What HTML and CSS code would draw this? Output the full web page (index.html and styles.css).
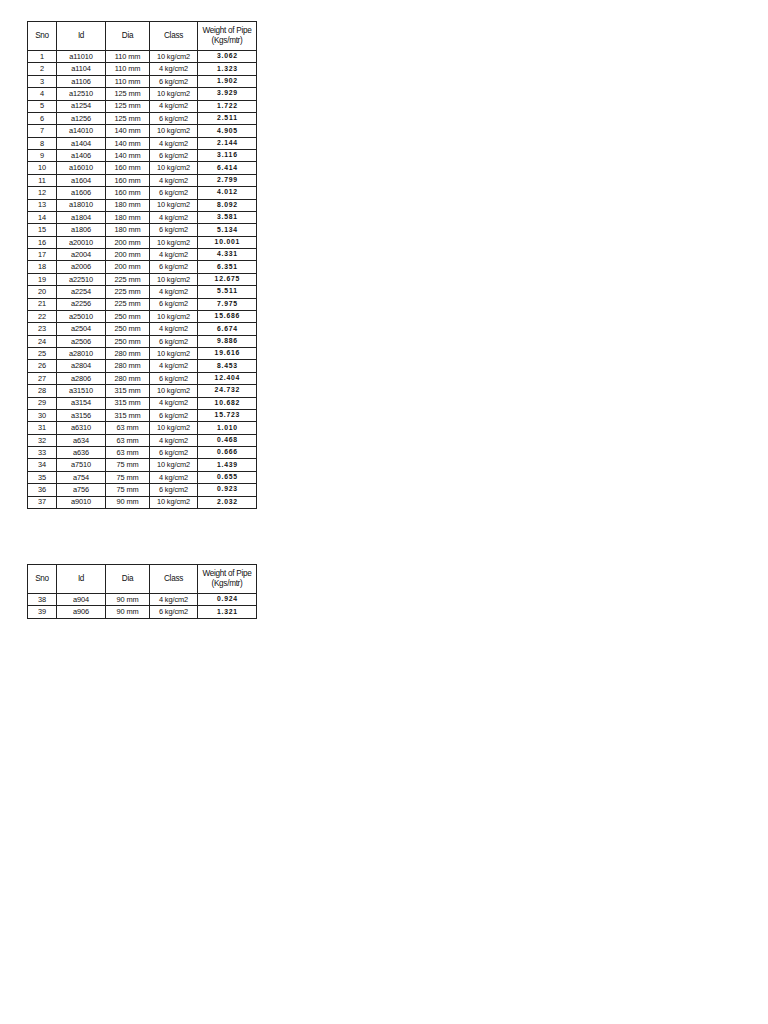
FILE: index.html
```html
<!DOCTYPE html>
<html>
<head>
<meta charset="utf-8">
<link rel="stylesheet" href="styles.css">
</head>
<body>
<div class="page">
<table class="pipes">
<colgroup><col class="c1"><col class="c2"><col class="c3"><col class="c4"><col class="c5"></colgroup>
<thead><tr><th>Sno</th><th>Id</th><th>Dia</th><th>Class</th><th>Weight of Pipe<br>(Kgs/mtr)</th></tr></thead>
<tbody>
<tr><td>1</td><td>a11010</td><td>110 mm</td><td>10 kg/cm2</td><td class="w">3.062</td></tr>
<tr><td>2</td><td>a1104</td><td>110 mm</td><td>4 kg/cm2</td><td class="w">1.323</td></tr>
<tr><td>3</td><td>a1106</td><td>110 mm</td><td>6 kg/cm2</td><td class="w">1.902</td></tr>
<tr><td>4</td><td>a12510</td><td>125 mm</td><td>10 kg/cm2</td><td class="w">3.929</td></tr>
<tr><td>5</td><td>a1254</td><td>125 mm</td><td>4 kg/cm2</td><td class="w">1.722</td></tr>
<tr><td>6</td><td>a1256</td><td>125 mm</td><td>6 kg/cm2</td><td class="w">2.511</td></tr>
<tr><td>7</td><td>a14010</td><td>140 mm</td><td>10 kg/cm2</td><td class="w">4.905</td></tr>
<tr><td>8</td><td>a1404</td><td>140 mm</td><td>4 kg/cm2</td><td class="w">2.144</td></tr>
<tr><td>9</td><td>a1406</td><td>140 mm</td><td>6 kg/cm2</td><td class="w">3.116</td></tr>
<tr><td>10</td><td>a16010</td><td>160 mm</td><td>10 kg/cm2</td><td class="w">6.414</td></tr>
<tr><td>11</td><td>a1604</td><td>160 mm</td><td>4 kg/cm2</td><td class="w">2.799</td></tr>
<tr><td>12</td><td>a1606</td><td>160 mm</td><td>6 kg/cm2</td><td class="w">4.012</td></tr>
<tr><td>13</td><td>a18010</td><td>180 mm</td><td>10 kg/cm2</td><td class="w">8.092</td></tr>
<tr><td>14</td><td>a1804</td><td>180 mm</td><td>4 kg/cm2</td><td class="w">3.581</td></tr>
<tr><td>15</td><td>a1806</td><td>180 mm</td><td>6 kg/cm2</td><td class="w">5.134</td></tr>
<tr><td>16</td><td>a20010</td><td>200 mm</td><td>10 kg/cm2</td><td class="w">10.001</td></tr>
<tr><td>17</td><td>a2004</td><td>200 mm</td><td>4 kg/cm2</td><td class="w">4.331</td></tr>
<tr><td>18</td><td>a2006</td><td>200 mm</td><td>6 kg/cm2</td><td class="w">6.351</td></tr>
<tr><td>19</td><td>a22510</td><td>225 mm</td><td>10 kg/cm2</td><td class="w">12.675</td></tr>
<tr><td>20</td><td>a2254</td><td>225 mm</td><td>4 kg/cm2</td><td class="w">5.511</td></tr>
<tr><td>21</td><td>a2256</td><td>225 mm</td><td>6 kg/cm2</td><td class="w">7.975</td></tr>
<tr><td>22</td><td>a25010</td><td>250 mm</td><td>10 kg/cm2</td><td class="w">15.686</td></tr>
<tr><td>23</td><td>a2504</td><td>250 mm</td><td>4 kg/cm2</td><td class="w">6.674</td></tr>
<tr><td>24</td><td>a2506</td><td>250 mm</td><td>6 kg/cm2</td><td class="w">9.886</td></tr>
<tr><td>25</td><td>a28010</td><td>280 mm</td><td>10 kg/cm2</td><td class="w">19.616</td></tr>
<tr><td>26</td><td>a2804</td><td>280 mm</td><td>4 kg/cm2</td><td class="w">8.453</td></tr>
<tr><td>27</td><td>a2806</td><td>280 mm</td><td>6 kg/cm2</td><td class="w">12.404</td></tr>
<tr><td>28</td><td>a31510</td><td>315 mm</td><td>10 kg/cm2</td><td class="w">24.732</td></tr>
<tr><td>29</td><td>a3154</td><td>315 mm</td><td>4 kg/cm2</td><td class="w">10.682</td></tr>
<tr><td>30</td><td>a3156</td><td>315 mm</td><td>6 kg/cm2</td><td class="w">15.723</td></tr>
<tr><td>31</td><td>a6310</td><td>63 mm</td><td>10 kg/cm2</td><td class="w">1.010</td></tr>
<tr><td>32</td><td>a634</td><td>63 mm</td><td>4 kg/cm2</td><td class="w">0.468</td></tr>
<tr><td>33</td><td>a636</td><td>63 mm</td><td>6 kg/cm2</td><td class="w">0.666</td></tr>
<tr><td>34</td><td>a7510</td><td>75 mm</td><td>10 kg/cm2</td><td class="w">1.439</td></tr>
<tr><td>35</td><td>a754</td><td>75 mm</td><td>4 kg/cm2</td><td class="w">0.655</td></tr>
<tr><td>36</td><td>a756</td><td>75 mm</td><td>6 kg/cm2</td><td class="w">0.923</td></tr>
<tr><td>37</td><td>a9010</td><td>90 mm</td><td>10 kg/cm2</td><td class="w">2.032</td></tr>
</tbody>
</table>
<table class="pipes second">
<colgroup><col class="c1"><col class="c2"><col class="c3"><col class="c4"><col class="c5"></colgroup>
<thead><tr><th>Sno</th><th>Id</th><th>Dia</th><th>Class</th><th>Weight of Pipe<br>(Kgs/mtr)</th></tr></thead>
<tbody>
<tr><td>38</td><td>a904</td><td>90 mm</td><td>4 kg/cm2</td><td class="w">0.924</td></tr>
<tr><td>39</td><td>a906</td><td>90 mm</td><td>6 kg/cm2</td><td class="w">1.321</td></tr>
</tbody>
</table>
</div>
</body>
</html>
```
FILE: styles.css
```css
html, body {
  margin: 0;
  padding: 0;
  background: #fff;
}
.page {
  padding: 21px 0 0 27px;
  font-family: "Liberation Sans", Arial, sans-serif;
  color: #111;
}
.pipes {
  border-collapse: collapse;
  table-layout: fixed;
  width: 230px;
  font-size: 7.4px;
  line-height: 1;
}
.second {
  margin-top: 55px;
}
.c1 { width: 29px; }
.c2 { width: 49px; }
.c3 { width: 44px; }
.c4 { width: 48px; }
.c5 { width: 59px; }
.pipes th, .pipes td {
  border: 1px solid #222;
  padding: 0;
  text-align: center;
  vertical-align: middle;
  overflow: hidden;
  white-space: nowrap;
}
.pipes th {
  height: 28px;
  font-weight: normal;
  font-size: 8.2px;
  line-height: 10px;
  letter-spacing: -0.3px;
}
.pipes td {
  height: 11.38px;
  letter-spacing: -0.1px;
}
.pipes td.w {
  font-weight: bold;
  letter-spacing: 0.8px;
  font-size: 6.8px;
  text-indent: 0.8px;
}
```
